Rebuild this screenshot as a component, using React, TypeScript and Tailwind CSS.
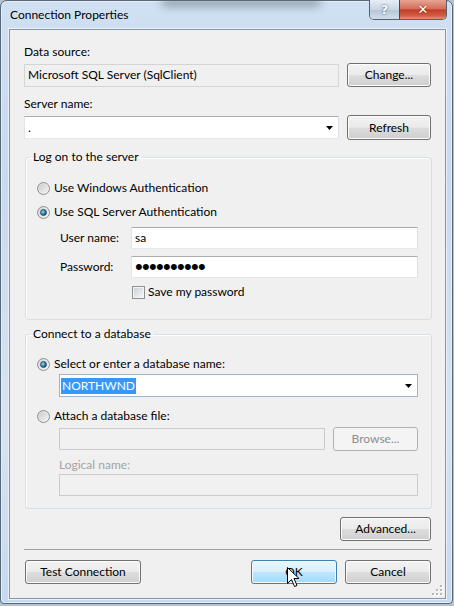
import React from "react";

const btnBase =
  "flex items-center justify-center rounded-[3px] border text-[12px] leading-[16px]";
const btnNormal =
  "text-black border-[#707070] bg-[linear-gradient(to_bottom,#f2f2f2_0%,#ebebeb_48%,#dddddd_52%,#cfcfcf_100%)] shadow-[inset_0_0_0_1px_#fcfcfc]";
const btnHot =
  "text-black border-[#3c7fb1] bg-[linear-gradient(to_bottom,#eaf6fd_0%,#d9f0fc_48%,#bee6fd_52%,#a7d9f5_100%)] shadow-[inset_0_0_0_1px_#f4fbfe]";
const btnDisabled = "border-[#adb2b5] bg-[#f4f4f4] text-[#8d8d8d]";

function Button({
  children,
  className = "",
  hot = false,
  disabled = false,
}: {
  children: React.ReactNode;
  className?: string;
  hot?: boolean;
  disabled?: boolean;
}) {
  const look = disabled ? btnDisabled : hot ? btnHot : btnNormal;
  return <div className={`${btnBase} ${look} ${className}`}>{children}</div>;
}

function Radio({ checked }: { checked?: boolean }) {
  return (
    <div className="flex h-[13px] w-[13px] shrink-0 items-center justify-center rounded-full border border-[#8e8f8f] bg-[linear-gradient(135deg,#d6d6d6,#f6f6f6)]">
      {checked ? (
        <div className="h-[7px] w-[7px] rounded-full border border-[#1f4a68] bg-[radial-gradient(circle_at_35%_35%,#9fd6f5_0%,#3b8ab8_45%,#0c3d5e_100%)]" />
      ) : (
        <div className="h-[9px] w-[9px] rounded-full bg-[linear-gradient(135deg,#cbcbcb,#f4f4f4)]" />
      )}
    </div>
  );
}

function Checkbox() {
  return (
    <div className="flex h-[13px] w-[13px] shrink-0 items-center justify-center border border-[#8e8f8f] bg-[#f4f4f4]">
      <div className="h-[9px] w-[9px] bg-[linear-gradient(135deg,#cbcfd5,#f7f7f7)]" />
    </div>
  );
}

function DropArrow() {
  return (
    <svg width="7" height="4" viewBox="0 0 7 4" className="shrink-0">
      <path d="M0 0 H7 L3.5 4 Z" fill="#000" />
    </svg>
  );
}

function Cursor() {
  return (
    <svg width="13" height="21" viewBox="0 0 13 21" className="absolute left-[287px] top-[567px]">
      <path
        d="M0.5 0.5 V16.5 L4.5 12.5 L7.5 19.5 L10 18.5 L7 11.5 L12 11.5 Z"
        fill="#fff"
        stroke="#000"
        strokeWidth="1"
        strokeLinejoin="miter"
      />
    </svg>
  );
}

function Grip() {
  const dots = [
    [8, 0],
    [4, 4],
    [8, 4],
    [0, 8],
    [4, 8],
    [8, 8],
  ];
  return (
    <svg width="11" height="11" viewBox="0 0 11 11" className="absolute bottom-[2px] right-[2px]">
      {dots.map(([x, y], i) => (
        <g key={i}>
          <rect x={x + 1} y={y + 1} width="2" height="2" fill="#fff" />
          <rect x={x} y={y} width="2" height="2" fill="#b8b8b8" />
        </g>
      ))}
    </svg>
  );
}

const inputBox =
  "flex items-center border border-[#abadb3] border-r-[#dbdfe6] border-b-[#e3e9ef] border-l-[#e2e3ea] bg-white px-[3px] text-[12px] leading-[16px]";
const disabledBox = "border border-[#c9cbcf] bg-[#f1f1f1]";

export default function App() {
  return (
    <div className="relative h-[606px] w-[454px] overflow-hidden bg-[#b4c3d2] font-['Lato',sans-serif] text-[12px] leading-[16px] text-black">
      <div className="relative flex h-[604px] w-[453px] flex-col rounded-t-[7px] rounded-b-[4px] border border-[#56677a] bg-[linear-gradient(to_bottom,#cfe0f2_0%,#c8daee_30%,#d6e4f2_70%,#c6d9ee_100%)] pb-[4px] pl-[8px] pr-[6px] shadow-[inset_0_0_0_1px_#e6eef7]">
        {/* blurred glass behind the caption */}
        <div className="pointer-events-none absolute left-[160px] top-[-4px] h-[10px] w-[160px] rounded-full bg-[#5d6b78] opacity-50 blur-[4px]" />

        {/* caption bar */}
        <div className="relative flex h-[28px] shrink-0 items-start justify-between">
          <div className="pl-[1px] pt-[6px] text-[12px] leading-[16px] text-black">
            Connection Properties
          </div>
          <div className="mr-[-1px] mt-[-1px] flex h-[20px] overflow-hidden rounded-b-[5px] border border-[#54606c] border-t-0">
            <div className="flex w-[29px] items-center justify-center bg-[linear-gradient(to_bottom,#e8eef6_0%,#c9d6e4_50%,#b6c6d8_52%,#d0dde9_100%)] font-['DejaVu_Sans',sans-serif] text-[13px] font-bold leading-none text-[#f7f9fb] [text-shadow:0_0_2px_#34475c]">
              ?
            </div>
            <div className="flex w-[47px] items-center justify-center border-l border-[#6f3a34] bg-[linear-gradient(to_bottom,#e8a493_0%,#d4705b_45%,#c0402a_52%,#d1583e_80%,#e5906f_100%)] font-['DejaVu_Sans',sans-serif] text-[13px] font-bold leading-none text-white [text-shadow:0_0_2px_#4a1208]">
              ✕
            </div>
          </div>
        </div>

        {/* client area */}
        <div className="relative flex flex-1 flex-col border border-[#8596a8] bg-[#f0f0f0] pl-[14px] pr-[13px] pt-[14px] shadow-[0_0_0_1px_#e9f0f8]">
          <div>Data source:</div>
          <div className="mt-[3px] flex h-[24px] items-center justify-between">
            <div className="flex h-[23px] w-[315px] items-center border border-[#d4d4d4] bg-[#f0f0f0] px-[3px]">
              Microsoft SQL Server (SqlClient)
            </div>
            <Button className="mr-[1px] h-[24px] w-[84px]">Change...</Button>
          </div>

          <div className="mt-[9px]">Server name:</div>
          <div className="mt-[3px] flex h-[25px] items-center justify-between">
            <div className={`${inputBox} h-[23px] w-[315px] justify-between pr-[5px]`}>
              <span>.</span>
              <DropArrow />
            </div>
            <Button className="mr-[1px] h-[25px] w-[84px]">Refresh</Button>
          </div>

          {/* log on group */}
          <fieldset className="ml-[1px] mt-[9px] rounded-[3px] border border-[#d5dfe5] pb-[19px] pl-[11px] pr-[13px] shadow-[inset_1px_1px_0_#fff]">
            <legend className="ml-[-7px] px-[3px]">Log on to the server</legend>
            <div className="mt-[15px] flex h-[16px] items-center gap-[4px]">
              <Radio />
              <span>Use Windows Authentication</span>
            </div>
            <div className="mt-[8px] flex h-[16px] items-center gap-[4px]">
              <Radio checked />
              <span>Use SQL Server Authentication</span>
            </div>
            <div className="mt-[7px] flex items-center">
              <span className="ml-[23px] w-[71px]">User name:</span>
              <div className={`${inputBox} h-[22px] flex-1`}>sa</div>
            </div>
            <div className="mt-[7px] flex items-center">
              <span className="ml-[23px] w-[71px]">Password:</span>
              <div className={`${inputBox} h-[22px] flex-1`}>
                <span className="font-['Liberation_Sans',sans-serif] text-[22px] leading-[16px] tracking-[-0.7px]">
                  ••••••••••
                </span>
              </div>
            </div>
            <div className="ml-[95px] mt-[6px] flex h-[16px] items-center gap-[3px]">
              <Checkbox />
              <span>Save my password</span>
            </div>
          </fieldset>

          {/* database group */}
          <fieldset className="ml-[1px] mt-[6px] rounded-[3px] border border-[#d5dfe5] pb-[12px] pl-[11px] pr-[13px] shadow-[inset_1px_1px_0_#fff]">
            <legend className="ml-[-7px] px-[3px]">Connect to a database</legend>
            <div className="mt-[14px] flex h-[16px] items-center gap-[4px]">
              <Radio checked />
              <span>Select or enter a database name:</span>
            </div>
            <div className="ml-[22px] mt-[2px] flex h-[23px] items-center justify-between border border-[#9fb4c8] bg-white pl-[1px] pr-[5px]">
              <span className="bg-[#3399ff] px-[1px] text-white">NORTHWND</span>
              <DropArrow />
            </div>
            <div className="mt-[11px] flex h-[16px] items-center gap-[4px]">
              <Radio />
              <span>Attach a database file:</span>
            </div>
            <div className="ml-[22px] mt-[3px] flex h-[24px] items-center justify-between">
              <div className={`${disabledBox} h-[22px] w-[266px]`} />
              <Button disabled className="h-[24px] w-[85px]">
                Browse...
              </Button>
            </div>
            <div className="ml-[22px] mt-[6px] text-[#a3a3a3]">Logical name:</div>
            <div className={`${disabledBox} ml-[22px] mt-[1px] h-[22px]`} />
          </fieldset>

          <div className="mt-[8px] flex justify-end">
            <Button className="mr-[1px] h-[24px] w-[91px]">Advanced...</Button>
          </div>

          <div className="mt-[8px] h-[2px] border-t border-[#a0a0a0] border-b-white" />

          <div className="mt-[9px] flex items-center">
            <Button className="ml-[1px] h-[24px] w-[116px]">Test Connection</Button>
            <div className="flex-1" />
            <Button hot className="h-[24px] w-[86px]">
              OK
            </Button>
            <Button className="ml-[8px] mr-[1px] h-[24px] w-[86px]">Cancel</Button>
          </div>

          <Grip />
        </div>
      </div>
      <Cursor />
    </div>
  );
}
